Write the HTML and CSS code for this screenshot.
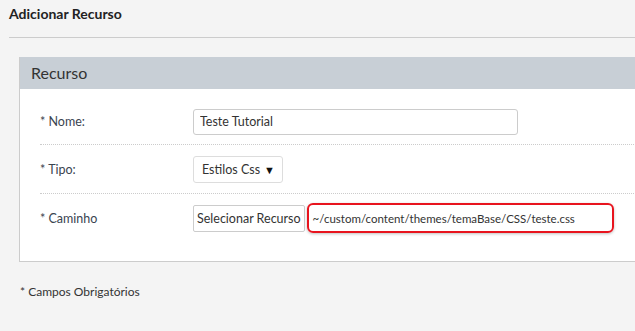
FILE: index.html
```html
<!DOCTYPE html>
<html>
<head>
<meta charset="utf-8">
<link rel="stylesheet" href="styles.css">
</head>
<body>
<div class="page">
  <h1 class="title">Adicionar Recurso</h1>
  <div class="panel">
    <div class="panel-head">Recurso</div>
    <div class="panel-body">
      <div class="row first">
        <label class="lbl">* Nome:</label>
        <div class="ctl"><input class="text name" type="text" value="Teste Tutorial"></div>
      </div>
      <div class="row">
        <label class="lbl">* Tipo:</label>
        <div class="ctl"><div class="select"><span>Estilos Css</span><span class="caret">▼</span></div></div>
      </div>
      <div class="row last">
        <label class="lbl">* Caminho</label>
        <div class="ctl">
          <button class="btn">Selecionar Recurso</button>
          <div class="hl"><span class="path">~/custom/content/themes/temaBase/CSS/teste.css</span></div>
        </div>
      </div>
    </div>
  </div>
  <p class="note">* Campos Obrigatórios</p>
</div>
</body>
</html>
```
FILE: styles.css
```css
* { box-sizing: border-box; }
html, body { margin: 0; padding: 0; background: #f4f4f4; overflow: hidden; }
body { font-family: Lato, "Open Sans", sans-serif; color: #333; width: 635px; height: 331px; }
.page { padding: 0 0 0 9px; }
.title { margin: 0; padding-top: 5px; height: 38px; font-size: 14px; font-weight: 700; color: #222; border-bottom: 1px solid #ccc; }
.panel { margin: 19px -10px 0 10px; border: 1px solid #ccc; border-top: 0; background: #fff; }
.panel-head { background: #c8cfd6; height: 32px; padding: 6px 0 0 11px; font-size: 16px; color: #333; }
.panel-body { padding: 0 0 19px 20px; }
.row { display: flex; align-items: center; border-bottom: 1px dotted #ccc; height: 49px; }
.row.first { height: 56px; padding-top: 10px; }
.row.last { border-bottom: 0; height: 48px; }
.lbl { width: 153px; font-size: 12.5px; color: #3a4450; }
.ctl { display: flex; align-items: center; }
.text { font-family: inherit; font-size: 12.5px; color: #333; border: 1px solid #ccc; border-radius: 3px; height: 26px; padding: 0 6px; outline: none; }
.name { width: 325px; }
.select { font-size: 12.5px; border: 1px solid #ddd; border-radius: 3px; height: 27px; width: 90px; display: flex; align-items: center; justify-content: space-between; padding: 0 7px 0 8px; color: #333; white-space: nowrap; }
.caret { font-size: 11px; color: #111; }
.btn { font-family: inherit; font-size: 12.5px; color: #333; background: #fff; border: 1px solid #ccc; border-radius: 2px; height: 27px; padding: 0 3px; }
.hl { margin-left: 2px; width: 307px; height: 30px; border: 2px solid #e8141e; border-radius: 6px; display: flex; align-items: center; padding-left: 4px; box-shadow: 0 1px 3px rgba(0,0,0,0.25); }
.path { font-size: 11.5px; color: #333; }
.note { margin: 22px 0 0 11px; font-size: 12px; color: #333; }
```
